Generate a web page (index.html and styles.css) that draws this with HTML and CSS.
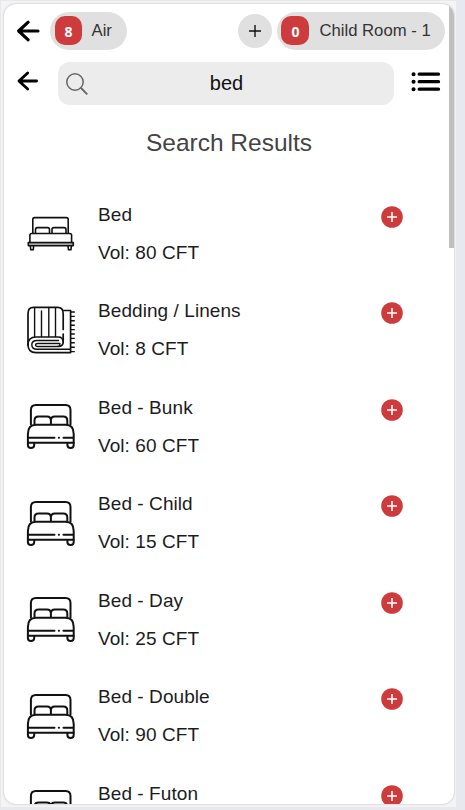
FILE: index.html
```
<!DOCTYPE html>
<html lang="en">
<head>
  <meta charset="UTF-8" />
  <meta name="viewport" content="width=device-width, initial-scale=1" />
  <title>Search Results</title>
  <link rel="stylesheet" href="styles.css">
</head>
<body>
  <!-- Shared icons -->
  <svg class="sprite">
    <symbol id="arrow" viewBox="0 0 24 22">
      <path d="M12.2 2.2 L2.6 11 L12.2 19.8 M2.8 11 H22" fill="none" stroke="#000" stroke-width="3.1" stroke-linecap="round" stroke-linejoin="round" />
    </symbol>
    <symbol id="add" viewBox="0 0 22 22">
      <circle cx="11" cy="11" r="10.8" fill="#cd3b3d" />
      <path d="M11 6 V16 M6 11 H16" stroke="#fff" stroke-width="1.6" />
    </symbol>
    <symbol id="bed-flat" viewBox="0 0 50 50">
      <g fill="none" stroke="#111" stroke-width="1.6" stroke-linejoin="round">
        <path d="M6.8 25.5 V11.5 Q6.8 9.6 8.6 9.6 H40.4 Q42.2 9.6 42.2 11.5 V25.5" />
        <path d="M9.5 25 V21.5 Q9.5 19.6 11.4 19.6 H21.6 Q23.5 19.6 23.5 21.5 V25 M26 25 V21.5 Q26 19.6 27.9 19.6 H38.1 Q40 19.6 40 21.5 V25" />
        <path d="M3.9 34.5 V27.3 Q3.9 25.5 5.7 25.5 H43.8 Q45.6 25.5 45.6 27.3 V34.5" />
        <path d="M2.3 34.6 H47.3 V37.6 H2.3 Z" fill="#ddd" />
        <path d="M4.3 37.8 L4.8 41.8 H7.2 L7.7 37.8 M42 37.8 L42.5 41.8 H44.9 L45.4 37.8" />
      </g>
    </symbol>
    <symbol id="bed" viewBox="0 0 50 50">
      <g fill="none" stroke="#111" stroke-width="2" stroke-linecap="round">
        <path d="M4.9 23.5 V9 Q4.9 4 9.9 4 H39.5 Q44.5 4 44.5 9 V23.5" />
        <path d="M8.5 23 V19.5 Q8.5 15.6 12.5 15.6 H21 Q24.9 15.6 24.9 19.5 V23 M24.9 19.5 Q24.9 15.6 28.8 15.6 H37.3 Q41.3 15.6 41.3 19.5 V23" />
        <path d="M1.9 41.5 V33 Q1.9 23.8 10 23.8 H39.6 Q47.7 23.8 47.7 33 V41.5" />
        <path d="M2.5 36.7 H28.5 M32.8 36.7 H33 M37.5 36.7 H47" />
        <path d="M2.5 41.8 H47" />
        <path d="M1.9 41.8 V44 Q1.9 47 4.9 47 Q8.2 47 8.2 44 V42 M47.7 41.8 V44 Q47.7 47 44.7 47 Q41.4 47 41.4 44 V42" />
      </g>
    </symbol>
    <symbol id="linens" viewBox="0 0 50 50">
      <g fill="none" stroke="#111" stroke-width="1.7" stroke-linecap="round" stroke-linejoin="round">
        <path d="M2 40 V8.5 Q2 2.4 7.5 2.4 H31.5 Q37.2 2.4 37.2 8.5 V24.5 M37.2 29 V36" />
        <path d="M8.6 3 V31.5 M15.5 6 V31.5 M22.8 3 V31.5 M29.5 3 V31.5" stroke-width="1.4" />
        <path d="M37.5 5.5 H44.6 V47.6 H10 Q2 47.6 2 39.8 Q2 32 10 32 H32 Q37.2 32 37.2 37 Q37.2 41.5 32 41.5 H12" />
        <path d="M32.5 35.5 H11 Q5.8 35.5 5.8 39.8 Q5.8 44.3 11 44.3 H44" stroke-width="1.4" />
        <path d="M32.5 38.4 H12 Q9.5 38.4 9.5 40 Q9.5 41.5 12 41.5 H31 Q34 41.5 34 38.4 Z" fill="#ccc" stroke-width="1.2" />
        <path d="M45 7 H48.8 M45 11.4 H48.8 M45 15.8 H48.8 M45 20.2 H48.8 M45 24.6 H48.8 M45 29 H48.8 M45 33.4 H48.8 M45 37.8 H48.8 M45 42.2 H48.8 M45 46.6 H48.8" stroke-width="1.4" stroke-linecap="butt" />
      </g>
    </symbol>
  </svg>

  <div class="frame">
    <div class="container">
      <header>
        <svg class="back"><use href="#arrow" /></svg>
        <div class="chip"><span class="count">8</span>Air</div>
        <div class="new-room">
          <svg width="12" height="12"><path d="M6 0 V12 M0 6 H12" stroke="#111" stroke-width="1.4" /></svg>
        </div>
        <div class="chip room"><span class="count">0</span>Child Room - 1</div>
      </header>

      <div class="search-row">
        <svg class="back small"><use href="#arrow" /></svg>
        <div class="search-box">
          <svg class="search-icon" viewBox="0 0 22 22">
            <circle cx="9" cy="9" r="8.2" fill="none" stroke="#666" stroke-width="1.5" />
            <path d="M15 15 L21.3 21.3" stroke="#666" stroke-width="1.8" />
          </svg>
          <input type="text" value="bed" />
        </div>
        <svg class="menu" viewBox="0 0 30 20">
          <path d="M8.2 2.2 H27.5 M8.2 9.7 H27.5 M8.2 17.2 H27.5" stroke="#000" stroke-width="3.3" stroke-linecap="round" />
          <path d="M2.5 2.2 H2.6 M2.5 9.7 H2.6 M2.5 17.2 H2.6" stroke="#000" stroke-width="4" stroke-linecap="round" />
        </svg>
      </div>

      <h1>Search Results</h1>

      <ul class="results">
        <li>
          <svg class="thumb"><use href="#bed-flat" /></svg>
          <div class="info"><p>Bed</p><p>Vol: 80 CFT</p></div>
          <svg class="add"><use href="#add" /></svg>
        </li>
        <li>
          <svg class="thumb"><use href="#linens" /></svg>
          <div class="info"><p>Bedding / Linens</p><p>Vol: 8 CFT</p></div>
          <svg class="add"><use href="#add" /></svg>
        </li>
        <li>
          <svg class="thumb"><use href="#bed" /></svg>
          <div class="info"><p>Bed - Bunk</p><p>Vol: 60 CFT</p></div>
          <svg class="add"><use href="#add" /></svg>
        </li>
        <li>
          <svg class="thumb"><use href="#bed" /></svg>
          <div class="info"><p>Bed - Child</p><p>Vol: 15 CFT</p></div>
          <svg class="add"><use href="#add" /></svg>
        </li>
        <li>
          <svg class="thumb"><use href="#bed" /></svg>
          <div class="info"><p>Bed - Day</p><p>Vol: 25 CFT</p></div>
          <svg class="add"><use href="#add" /></svg>
        </li>
        <li>
          <svg class="thumb"><use href="#bed" /></svg>
          <div class="info"><p>Bed - Double</p><p>Vol: 90 CFT</p></div>
          <svg class="add"><use href="#add" /></svg>
        </li>
        <li>
          <svg class="thumb"><use href="#bed" /></svg>
          <div class="info"><p>Bed - Futon</p></div>
          <svg class="add"><use href="#add" /></svg>
        </li>
      </ul>
      <div class="scrollbar"></div>
    </div>
  </div>
</body>
</html>
```
FILE: styles.css
```
* {
  box-sizing: border-box;
}

body {
  margin: 0;
  height: 810px;
  padding: 1px;
  overflow: hidden;
  background: #e8e8ef;
  font-family: "Liberation Sans", Arial, sans-serif;
  color: #1c1c1c;
}

.sprite {
  position: absolute;
  width: 0;
  height: 0;
}

.frame {
  width: 455px;
  height: 806px;
  padding: 3px;
  background: #f4f4f5;
}

.container {
  position: relative;
  width: 450px;
  height: 800px;
  background: #fff;
  border-radius: 12px;
  box-shadow: 0 0 2px rgba(0, 0, 0, 0.3);
  overflow: hidden;
}

header {
  display: flex;
  align-items: center;
  height: 38px;
  margin-top: 8px;
  padding: 0 8.6px 0 12px;
}

.back {
  width: 24px;
  height: 22px;
  flex: none;
}

.back.small {
  width: 23px;
  height: 20px;
}

.chip {
  display: flex;
  align-items: center;
  height: 38px;
  width: 77px;
  margin-left: 10px;
  padding-left: 5px;
  padding-bottom: 1px;
  border-radius: 19px;
  background: #e0e0e0;
  color: #333;
  font-size: 16.7px;
  white-space: nowrap;
}

.chip.room {
  width: 168px;
  margin-left: 5px;
  padding-left: 4px;
}

.count {
  width: 27px;
  height: 29px;
  margin-right: 9.5px;
  padding-top: 2px;
  border-radius: 10px;
  background: #cd3b3d;
  color: #fff;
  font: bold 14px/27px "Open Sans", sans-serif;
  text-align: center;
}

.room .count {
  width: 28px;
  margin-right: 10px;
}

.new-room {
  display: flex;
  align-items: center;
  justify-content: center;
  width: 34px;
  height: 34px;
  margin-left: auto;
  border-radius: 50%;
  background: #e0e0e0;
}

.search-row {
  display: flex;
  align-items: center;
  height: 43px;
  margin-top: 12.3px;
  padding-left: 12px;
}

.search-row .back {
  margin-top: -5px;
}

.search-box {
  display: flex;
  align-items: center;
  width: 336px;
  height: 43px;
  margin-left: 18.5px;
  padding-left: 8px;
  border-radius: 12px;
  background: #ececec;
}

.search-icon {
  width: 22px;
  height: 22px;
  flex: none;
}

.search-box input {
  width: 278px;
  padding: 0;
  border: none;
  outline: none;
  background: none;
  color: #111;
  font: 20px "Liberation Sans", Arial, sans-serif;
  text-align: center;
}

.menu {
  width: 30px;
  height: 20px;
  margin-left: 17.5px;
  margin-top: -4px;
}

h1 {
  margin: 23.7px 0 0;
  color: #444;
  font-size: 24.5px;
  font-weight: normal;
  line-height: 28px;
  text-align: center;
}

.results {
  list-style: none;
  margin: 29.8px 0 0;
  padding: 0;
}

.results li {
  display: flex;
  height: 96.5px;
  padding: 8px 0 0 22px;
}

.thumb {
  width: 50px;
  height: 50px;
  flex: none;
  margin-top: 13.4px;
}

.info {
  flex: 1;
  margin: 0.8px 0 0 22px;
  font-size: 19px;
  letter-spacing: 0.07px;
}

.info p {
  margin: 0;
  line-height: 38px;
}

.add {
  width: 22px;
  height: 22px;
  margin: 10.9px 51.5px 0 0;
}

.scrollbar {
  position: absolute;
  top: 0;
  right: 0;
  width: 5px;
  height: 244px;
  background: #bfbfbf;
}
```
